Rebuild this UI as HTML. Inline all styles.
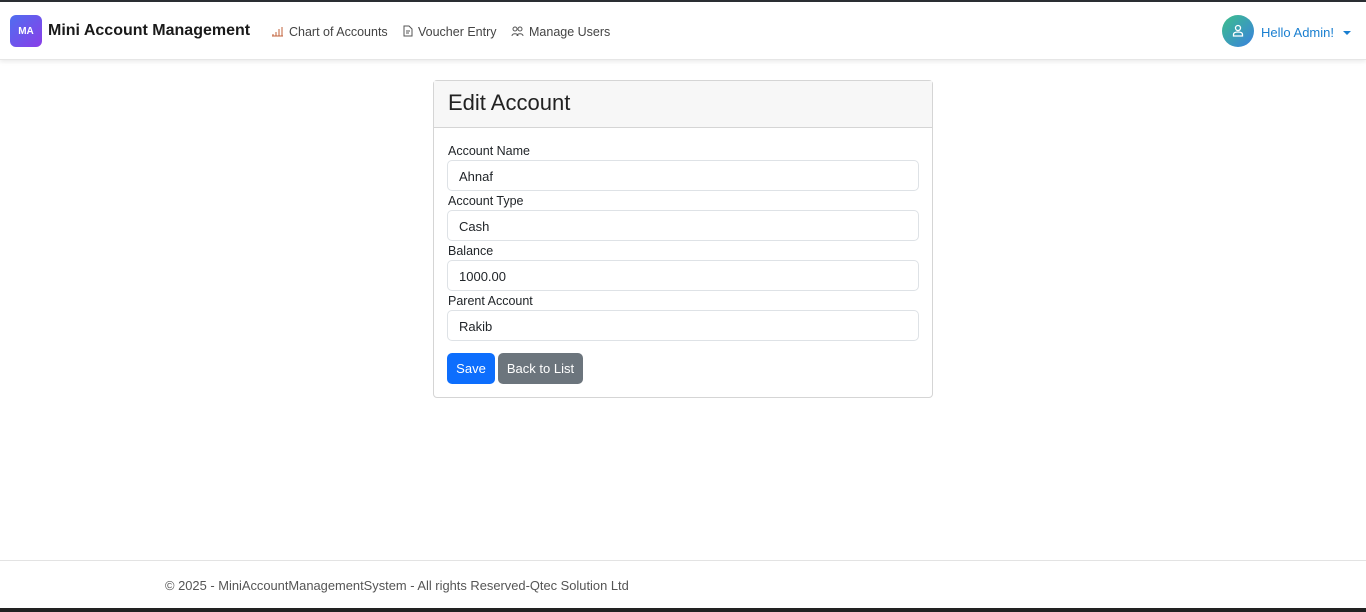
<!DOCTYPE html>
<html><head><meta charset="utf-8"><style>
*{box-sizing:border-box;margin:0;padding:0}
html,body{width:1366px;height:612px;overflow:hidden;background:#fff;font-family:"Liberation Sans",sans-serif;color:#212529}
.top{position:absolute;left:0;top:0;width:1366px;height:2px;background:#2b2f33}
.nav{position:absolute;top:2px;left:0;width:1366px;height:58px;background:#fff;box-shadow:0 2px 4px rgba(0,0,0,.08);border-bottom:1px solid #e6e6e6}
.logo{position:absolute;left:10px;top:13px;width:32px;height:32px;border-radius:6px;background:linear-gradient(135deg,#4f6ef0,#8a3ee8);color:#fff;font-size:10px;font-weight:bold;display:flex;align-items:center;justify-content:center}
.brand{position:absolute;left:48px;top:20px;font-size:16px;font-weight:bold;color:#1a1a1a}
.link{position:absolute;top:23px;font-size:12.5px;color:#444}
.link svg{vertical-align:-1px;margin-right:5px}
.av{position:absolute;left:1222px;top:13px;width:32px;height:32px;border-radius:50%;background:linear-gradient(135deg,#3cc08a,#3a80e0)}
.hello{position:absolute;left:1261px;top:23px;font-size:13px;color:#1a7fd0}
.caret{position:absolute;left:1343px;top:29px;width:0;height:0;border-left:4px solid transparent;border-right:4px solid transparent;border-top:4px solid #1a7fd0}
.card{position:absolute;left:433px;top:80px;width:500px;height:318px;border:1px solid #d5d5d5;border-radius:4px}
.ch{height:47px;background:#f7f7f7;border-bottom:1px solid #d5d5d5;padding:9px 14px;font-size:22px;color:#222;font-weight:500}
.lab{position:absolute;left:14px;font-size:12.5px}
.inp{position:absolute;left:13px;width:472px;height:31px;border:1px solid #dee2e6;border-radius:5px;padding:8px 11px;font-size:13px}
.btn{position:absolute;top:272px;height:31px;border-radius:5px;color:#fff;font-size:13px;text-align:center;line-height:31px}
.foot{position:absolute;left:0;top:560px;width:1366px;border-top:1px solid #e3e3e3}
.ft{position:absolute;left:165px;top:578px;font-size:12.9px;color:#555}
.bot{position:absolute;left:0;top:608px;width:1366px;height:4px;background:#222}
</style></head><body>
<div class="top"></div>
<div class="nav">
<div class="logo">MA</div>
<div class="brand">Mini Account Management</div>
<div class="link" style="left:271px"><svg width="13" height="11" viewBox="0 0 13 11" fill="none" stroke="#c0603a" stroke-width="1"><path d="M1 10h11M2 8v2M5 6v4M8 3v7M11 1v9"/></svg>Chart of Accounts</div>
<div class="link" style="left:403px"><svg width="10" height="12" viewBox="0 0 10 12" fill="none" stroke="#555" stroke-width="1"><path d="M1 1h5l3 3v7H1zM3 6h4M3 8h3"/></svg>Voucher Entry</div>
<div class="link" style="left:511px"><svg width="13" height="11" viewBox="0 0 13 11" fill="none" stroke="#555" stroke-width="1"><circle cx="4" cy="3" r="2"/><circle cx="9" cy="3" r="2"/><path d="M1 10c0-3 6-3 6 0M6 10c0-3 6-3 6 0"/></svg>Manage Users</div>
<div class="av"><svg width="32" height="32" viewBox="0 0 32 32" fill="none" stroke="#fff" stroke-width="1.3"><circle cx="16" cy="13" r="2.5"/><path d="M11.5 21v-1.5c0-1.5 1.5-2.5 4.5-2.5s4.5 1 4.5 2.5V21z"/></svg></div>
<div class="hello">Hello Admin!</div>
<div class="caret"></div>
</div>
<div class="card">
<div class="ch">Edit Account</div>
<div class="lab" style="top:63px">Account Name</div>
<div class="inp" style="top:79px">Ahnaf</div>
<div class="lab" style="top:113px">Account Type</div>
<div class="inp" style="top:129px">Cash</div>
<div class="lab" style="top:163px">Balance</div>
<div class="inp" style="top:179px">1000.00</div>
<div class="lab" style="top:213px">Parent Account</div>
<div class="inp" style="top:229px">Rakib</div>
<div class="btn" style="left:13px;width:48px;background:#0d6efd">Save</div>
<div class="btn" style="left:64px;width:85px;background:#6c757d">Back to List</div>
</div>
<div class="foot"></div>
<div class="ft">© 2025 - MiniAccountManagementSystem - All rights Reserved-Qtec Solution Ltd</div>
<div class="bot"></div>
</body></html>
